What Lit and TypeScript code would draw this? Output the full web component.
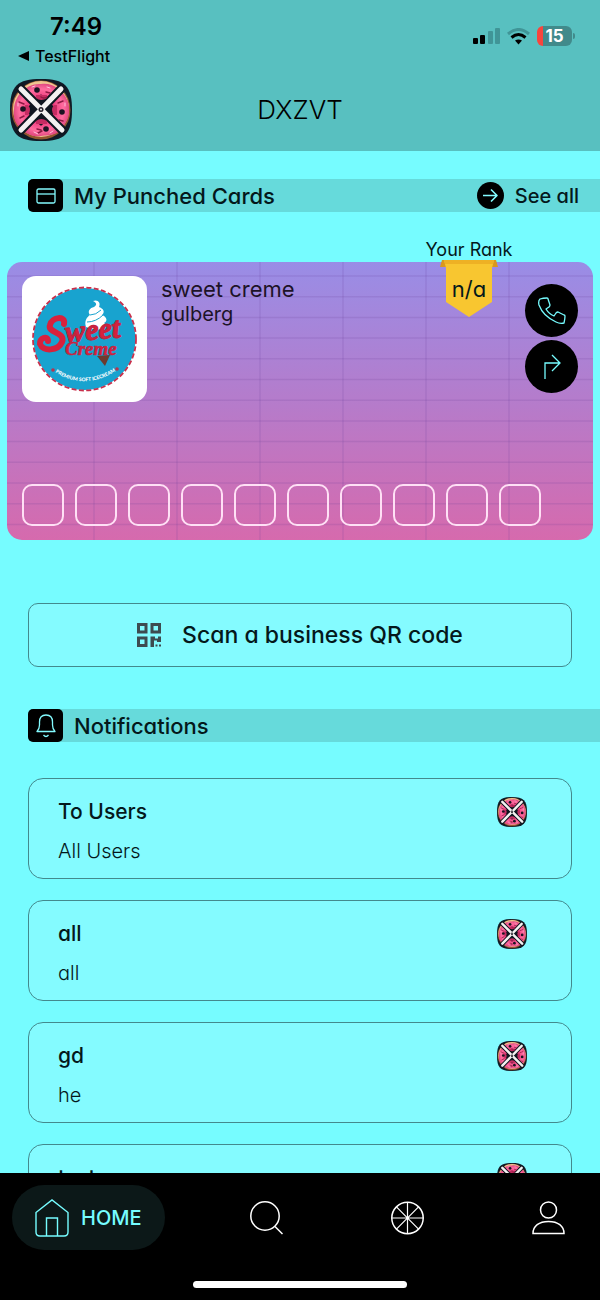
import { LitElement, css, html, svg } from "lit";
import { customElement, property } from "lit/decorators.js";

interface Notice {
  title: string;
  body: string;
}

const notices: Notice[] = [
  { title: 'To Users', body: 'All Users' },
  { title: 'all', body: 'all' },
  { title: 'gd', body: 'he' },
  { title: 'test', body: '' },
];

@customElement('donut-logo')
export class DonutLogo extends LitElement {
  static styles = css`
    :host {
      display: block;
      flex: none;
    }
    svg {
      display: block;
      width: 100%;
      height: 100%;
    }
  `;

  render() {
    return html`
      <svg viewBox="0 0 62 62" aria-hidden="true">
        <defs>
          <clipPath id="shape">
            <path d="M31 0C55 0 62 7 62 31S55 62 31 62S0 55 0 31S7 0 31 0Z" />
          </clipPath>
          <radialGradient id="icing">
            <stop offset="0.35" stop-color="#a01f48" />
            <stop offset="0.5" stop-color="#ee3f80" />
            <stop offset="0.8" stop-color="#ff6c9f" />
            <stop offset="1" stop-color="#e24a82" />
          </radialGradient>
        </defs>
        <g clip-path="url(#shape)">
          <rect width="62" height="62" fill="#101a26" />
          <circle cx="31" cy="31" r="29.500" fill="#94572f" />
          <circle cx="31" cy="30" r="28" fill="#efc491" />
          <path d="M31 5C38 4 43 6 47 9C54 14 60 22 59 31C60 39 54 48 47 54C41 57 35 56 31 57C24 58 18 56 14 52C5 46 3 39 4 31C4 22 9 14 15 10C20 6 25 5 31 5Z" fill="url(#icing)" />
          <path d="M11 10L52 51M51 10L11 51" stroke="#101620" stroke-width="9" stroke-linecap="round" />
          <path d="M31 17L45 31L31 45L17 31Z" fill="#101620" stroke="#101620" stroke-width="3" stroke-linejoin="round" />
          <path d="M26 19Q31 23 37 19V16H26ZM18 26Q22 31 18 36H15V26ZM44 26Q40 31 44 36H47V26ZM26 42Q31 38 37 42V45H26Z" fill="#c52c62" />
          <g fill="#1b1322">
            <circle cx="27" cy="11" r="2.800" />
            <circle cx="13" cy="30" r="2.800" />
            <circle cx="52" cy="33" r="2.800" />
            <circle cx="36" cy="50" r="2.800" />
          </g>
          <path d="M36 13l4 1M31 18q3 2 6 0M9 23l5 2M10 39l4-2M48 24l5-2M49 41l4 1M27 50l4 1M28 54l4-2" fill="none" stroke="#8c1a43" stroke-width="1.500" stroke-linecap="round" />
          <path d="M22 8l3-1M37 8l3 1M8 27v-3M55 27v-3M24 53l4 2M40 54l3-2" fill="none" stroke="#ffc2da" stroke-linecap="round" />
          <path d="M11 10L52 51M51 10L11 51" stroke="#f4f2f1" stroke-width="5" stroke-linecap="round" />
          <circle cx="31" cy="30.500" r="2.500" fill="#24202a" />
          <circle cx="31" cy="30.500" r="1" fill="#f4f2f1" />
        </g>
      </svg>
    `;
  }
}

@customElement('section-bar')
export class SectionBar extends LitElement {
  @property() heading = '';

  static styles = css`
    :host {
      display: flex;
      align-items: center;
      height: 33px;
      margin-left: 28px;
      padding-right: 21px;
      border-radius: 6px 0 0 6px;
      background: #66dadb;
    }
    .icon {
      display: grid;
      place-items: center;
      width: 35px;
      height: 33px;
      border-radius: 5px;
      background: #000;
    }
    h2 {
      flex: 1;
      margin: 0 0 0 11px;
      font-size: 22px;
      font-weight: 500;
      line-height: 28px;
      color: #04181b;
    }
  `;

  render() {
    return html`
      <span class="icon"><slot name="icon"></slot></span>
      <h2>${this.heading}</h2>
      <slot></slot>
    `;
  }
}

@customElement('punch-card')
export class PunchCard extends LitElement {
  @property() name = '';
  @property() branch = '';
  @property() rank = 'n/a';
  @property({type: Number}) slots = 10;

  static styles = css`
    :host {
      display: block;
      position: relative;
      padding: 14px 15px;
      border-radius: 15px;
      background: linear-gradient(#998de6, #b67bca 52%, #d66aad);
      color: #1d1328;
    }
    .grid {
      position: absolute;
      inset: 0;
      width: 100%;
      height: 100%;
    }
    .head {
      display: flex;
      position: relative;
      gap: 14px;
    }
    .brand {
      width: 125px;
      height: 126px;
      border-radius: 14px;
      background: #fff;
    }
    .names {
      flex: 1;
    }
    h3, p {
      margin: 0;
      font-weight: 400;
    }
    h3 {
      font-size: 22px;
      line-height: 26px;
    }
    p {
      font-size: 20px;
      line-height: 24px;
    }
    .actions {
      display: flex;
      flex-direction: column;
      gap: 3px;
      padding-top: 8px;
    }
    .actions a {
      display: grid;
      place-items: center;
      width: 53px;
      height: 53px;
      border-radius: 50%;
      background: #000;
    }
    .rank {
      display: flex;
      flex-direction: column;
      align-items: center;
      position: absolute;
      top: -22px;
      right: 74px;
      width: 100px;
      font-size: 18px;
      line-height: 20px;
      color: #04181b;
    }
    .ribbon {
      display: grid;
      position: relative;
      width: 58px;
      height: 58px;
      font-size: 22px;
      line-height: 58px;
      text-align: center;
    }
    .ribbon > * {
      grid-area: 1 / 1;
    }
    .ribbon span {
      z-index: 1;
    }
    .stamps {
      display: flex;
      position: relative;
      gap: 11px;
      margin: 82px 0 0;
      padding: 0;
      list-style: none;
    }
    .stamps li {
      box-sizing: border-box;
      width: 42px;
      height: 42px;
      border: 2px solid #ffe0f5;
      border-radius: 10px;
    }
  `;

  render() {
    const columns = [87, 170, 253, 336, 419, 502];
    const rows = Array.from({ length: 13 }, (_, i) => 14 + i * 20.7);
    return html`
      <svg class="grid" viewBox="0 0 586 278" preserveAspectRatio="none" aria-hidden="true">
        <g stroke="#6b3f96" stroke-opacity=".16" stroke-width="1.500">
          ${columns.map((x) => svg`<line x1=${x} x2=${x} y1="0" y2="278" />`)}
          ${rows.map((y) => svg`<line x1="0" x2="586" y1=${y} y2=${y} />`)}
        </g>
      </svg>
      <div class="head">
        <svg class="brand" viewBox="0 0 125 126" role="img" aria-label="Sweet Creme">
          <circle cx="62.500" cy="63" r="51" fill="#18a3cf" />
          <circle cx="62.500" cy="63" r="51.500" fill="none" stroke="#c92f4b" stroke-width="1.800" stroke-dasharray="5 2.400" />
          <path d="M64 51C62 45 65 41 68 39C65 35 68 32 72 31C75 29 75 27 71 25C76 23 79 27 77 31C82 33 83 36 80 39C85 41 86 45 82 47C85 49 84 51 82 53C75 54 69 53 64 51Z" fill="#fff" />
          <path d="M68 39q6 0 11-5M65 46q9 0 16-7" fill="none" stroke="#18a3cf" stroke-width="1" />
          <g fill="#d8213c" stroke="#c02440" stroke-width="1.200" font-family="'Liberation Serif', serif" font-style="italic" font-weight="700">
            <path d="M42 48C44 39 30 41 28 49C25 57 44 56 40 66C36 75 21 76 18 68C17 62 26 59 26 65" fill="none" stroke="#d8213c" stroke-width="6" stroke-linecap="round" />
            <text x="44" y="66" font-size="30" transform="rotate(-5 44 66)">weet</text>
            <text x="43" y="79" font-size="19" stroke-width=".6">Creme</text>
          </g>
          <path d="M75 80L88 79L83 90Z" fill="#6d3b2e" />
          <path id="arc" d="M30 94Q62 117 97 93" fill="none" />
          <text font-family="Lato, sans-serif" font-size="5" font-weight="900" fill="#fff">
            <textPath href="#arc" startOffset="50%" text-anchor="middle">PREMIUM SOFT ICECREAM</textPath>
          </text>
          <circle cx="31" cy="94" r="1.800" fill="#b5344f" />
          <circle cx="95" cy="93" r="1.800" fill="#b5344f" />
        </svg>
        <div class="names">
          <h3>${this.name}</h3>
          <p>${this.branch}</p>
        </div>
        <div class="actions">
          <a href="#call" aria-label="Call">
            <svg width="28" height="28" viewBox="0 0 28 28" fill="none" stroke="#76fcff" stroke-width="1.300" stroke-linejoin="round">
              <path d="M2 2Q5 1 9 1Q10 1 10 2L12 8Q12 9 11 10L8 12Q11 17 16 19L18 16Q19 15 20 15L26 18Q27 18 27 19Q27 22 26 26Q22 27 18 25Q5 19 1 8Q0 4 2 2Z" />
            </svg>
          </a>
          <a href="#route" aria-label="Directions">
            <svg width="28" height="28" viewBox="0 0 28 28" fill="none" stroke="#76fcff" stroke-width="1.300">
              <path d="M7 26V10H21M14 2L22 10L14 18" />
            </svg>
          </a>
        </div>
      </div>
      <div class="rank">
        <span>Your Rank</span>
        <div class="ribbon">
          <svg width="58" height="58" viewBox="0 0 58 58" aria-hidden="true">
            <path d="M2 0H56L58 7H0Z" fill="#d9981d" />
            <path d="M4 0H54L52 8V42L29 57L6 42V8Z" fill="#f8c630" />
            <path d="M4 0H54L53 4H5Z" fill="#eeb124" />
          </svg>
          <span>${this.rank}</span>
        </div>
      </div>
      <ul class="stamps">
        ${Array.from({ length: this.slots }, () => html`<li></li>`)}
      </ul>
    `;
  }
}

@customElement('app-root')
export class AppRoot extends LitElement {
  static styles = css`
    :host {
      display: flex;
      flex-direction: column;
      height: 100vh;
      overflow: hidden;
      background: #76fcff;
      color: #04181b;
      font-family: Inter, "Liberation Sans", sans-serif;
      font-feature-settings: "cv11";
    }
    a {
      color: inherit;
      text-decoration: none;
    }
    svg {
      display: block;
    }
    header {
      flex: none;
      padding: 13px 10px 10px;
      background: #58c0c0;
      color: #000;
    }
    .status {
      display: flex;
      justify-content: space-between;
      padding: 0 15px 13px 8px;
    }
    .time {
      padding-left: 32px;
      font-size: 24px;
      font-weight: 600;
      line-height: 28px;
    }
    .back {
      display: flex;
      align-items: center;
      gap: 6px;
      margin-top: 5px;
      font-size: 16px;
      font-weight: 500;
      line-height: 20px;
    }
    .signals {
      display: flex;
      align-items: center;
      gap: 7px;
      height: 46px;
    }
    .battery {
      display: flex;
      align-items: center;
    }
    .level {
      width: 35px;
      border-radius: 6px;
      background: linear-gradient(90deg, #f8453d 6px, #418a8b 6px);
      color: #fff;
      font-size: 17px;
      font-weight: 700;
      line-height: 20px;
      text-align: center;
    }
    .tip {
      width: 2px;
      height: 6px;
      margin-left: 1px;
      border-radius: 0 3px 3px 0;
      background: #418a8b;
    }
    .title {
      display: grid;
      grid-template-columns: 62px 1fr 62px;
      align-items: center;
    }
    .title donut-logo {
      height: 62px;
    }
    h1 {
      margin: 0;
      font-size: 26px;
      font-weight: 300;
      line-height: 32px;
      text-align: center;
    }
    main {
      flex: 1;
      min-height: 0;
      padding-top: 28px;
      overflow: hidden;
    }
    .see-all {
      display: flex;
      align-items: center;
      gap: 11px;
      font-size: 20px;
      font-weight: 500;
      line-height: 28px;
    }
    punch-card {
      margin: 50px 7px 63px;
    }
    .scan {
      display: flex;
      align-items: center;
      justify-content: center;
      gap: 21px;
      box-sizing: border-box;
      width: calc(100% - 56px);
      height: 64px;
      margin: 0 28px 42px;
      padding: 0;
      border: 1px solid #43898d;
      border-radius: 10px;
      background: #84fbff;
      color: inherit;
      font: 500 23px/30px Inter, "Liberation Sans", sans-serif;
      font-feature-settings: inherit;
    }
    .notices {
      display: flex;
      flex-direction: column;
      gap: 21px;
      margin: 36px 28px 0;
      padding: 0;
      list-style: none;
    }
    .notices li {
      display: flex;
      align-items: flex-start;
      justify-content: space-between;
      padding: 18px 44px 13px 29px;
      border: 1px solid #43898d;
      border-radius: 15px;
      background: #84fbff;
    }
    .notices h3, .notices p {
      margin: 0;
    }
    .notices h3 {
      font-size: 21px;
      font-weight: 500;
      line-height: 30px;
    }
    .notices p {
      margin-top: 10px;
      font-size: 20px;
      font-weight: 300;
      line-height: 28px;
    }
    .notices donut-logo {
      width: 30px;
      height: 30px;
    }
    footer {
      flex: none;
      padding: 12px;
      background: #000;
    }
    nav {
      display: flex;
      justify-content: space-between;
      color: #fff;
    }
    nav a {
      display: flex;
      align-items: center;
      gap: 12px;
      height: 65px;
      padding: 0 23px;
      border-radius: 33px;
    }
    nav .active {
      background: #0c1818;
      color: #76fcff;
      font-size: 20px;
      font-weight: 500;
    }
    .indicator {
      width: 214px;
      height: 7px;
      margin: 31px auto 0;
      border-radius: 4px;
      background: #fff;
    }
  `;

  renderHeader() {
    return html`
      <header>
        <div class="status">
          <div>
            <div class="time">7:49</div>
            <a class="back" href="#back">
              <svg width="11" height="10" viewBox="0 0 11 10"><path d="M0 5L11 0V10Z" /></svg>
              TestFlight
            </a>
          </div>
          <div class="signals">
            <svg width="27" height="17" viewBox="0 0 27 17" aria-hidden="true">
              <rect y="10" width="5" height="6" rx="1" />
              <rect x="7" y="7" width="5" height="9" rx="1" />
              <g fill="#409597">
                <rect x="15" y="3" width="5" height="13" rx="1" />
                <rect x="22" width="5" height="16" rx="1" />
              </g>
            </svg>
            <svg width="23" height="17" viewBox="0 0 23 17" fill="none" stroke-width="3" aria-hidden="true">
              <path d="M1 6Q11.500-3 22 6" stroke="#409597" />
              <path d="M4.500 9.500Q11.500 3.500 18.500 9.500" stroke="#000" />
              <path d="M8 12.500Q11.500 10.500 15 12.500L11.500 16.500Z" fill="#000" />
            </svg>
            <div class="battery"><span class="level">15</span><span class="tip"></span></div>
          </div>
        </div>
        <div class="title">
          <donut-logo></donut-logo>
          <h1>DXZVT</h1>
        </div>
      </header>
    `;
  }

  renderNav() {
    return html`
      <footer>
        <nav>
          <a class="active" href="#home">
            <svg width="34" height="38" viewBox="0 0 34 38" fill="none" stroke="currentColor" stroke-width="1.400">
              <path d="M1 13.500L17 1L33 13.500V33Q33 37 29 37H5Q1 37 1 33ZM11.500 37V19H22.500V37" />
            </svg>
            HOME
          </a>
          <a href="#search" aria-label="Search">
            <svg width="33" height="34" viewBox="0 0 33 34" fill="none" stroke="currentColor" stroke-width="1.500">
              <circle cx="15" cy="15" r="14.200" />
              <path d="M25 25.500L32.500 33" />
            </svg>
          </a>
          <a href="#wheel" aria-label="Wheel">
            <svg width="33" height="34" viewBox="0 0 33 34" fill="none" stroke="currentColor" stroke-width="1.500">
              <circle cx="16.500" cy="17" r="15.700" />
              <path d="M16.500 1V33M.5 17H32.500M5.200 5.700L27.800 28.300M27.800 5.700L5.200 28.300" stroke-width="1.200" />
            </svg>
          </a>
          <a href="#profile" aria-label="Profile">
            <svg width="33" height="34" viewBox="0 0 33 34" fill="none" stroke="currentColor" stroke-width="1.500">
              <circle cx="16.500" cy="9" r="8" />
              <path d="M1 32.500C1 25 7 20.500 16.500 20.500S32 25 32 32.500Z" />
            </svg>
          </a>
        </nav>
        <div class="indicator"></div>
      </footer>
    `;
  }

  render() {
    return html`
      ${this.renderHeader()}
      <main>
        <section-bar heading="My Punched Cards">
          <svg slot="icon" width="20" height="16" viewBox="0 0 20 16" fill="none" stroke="#84fbff" stroke-width="1.300">
            <rect x="1" y="1" width="18" height="14" rx="1.500" />
            <path d="M1 6H19" />
          </svg>
          <a class="see-all" href="#cards">
            <svg width="27" height="27" viewBox="0 0 27 27" fill="none" stroke="#84fbff" stroke-width="1.600">
              <circle cx="13.500" cy="13.500" r="13.500" fill="#000" stroke="none" />
              <path d="M6 13.500H20M14 7.500L20 13.500L14 19.500" stroke-linejoin="round" />
            </svg>
            See all
          </a>
        </section-bar>
        <punch-card name="sweet creme" branch="gulberg"></punch-card>
        <button class="scan" type="button">
          <svg width="24" height="24" viewBox="0 0 24 24" fill="#3d4b50" aria-hidden="true">
            <path fill-rule="evenodd" d="M0 0H10.500V10.500H0ZM3 3V7.500H7.500V3ZM13.500 0H24V10.500H13.500ZM16.500 3V7.500H21V3ZM0 13.500H10.500V24H0ZM3 16.500V21H7.500V16.500Z" />
            <path d="M13.500 13.500H18V15.500H21V13.500H24V19H20V17.500H17V24H13.500ZM18.500 21.500H20.500V23.500H18.500ZM22 21.500H24V23.500H22Z" />
          </svg>
          Scan a business QR code
        </button>
        <section-bar heading="Notifications">
          <svg slot="icon" width="20" height="24" viewBox="0 0 20 24" fill="none" stroke="#84fbff" stroke-width="1.300" stroke-linejoin="round">
            <path d="M1 17.500Q3.500 15 3.500 11V8Q3.500 1 10 1T16.500 8V11Q16.500 15 19 17.500ZM7.500 21Q10 24 12.500 21" />
          </svg>
        </section-bar>
        <ul class="notices">
          ${notices.map((notice) => html`
            <li>
              <div>
                <h3>${notice.title}</h3>
                <p>${notice.body}</p>
              </div>
              <donut-logo></donut-logo>
            </li>
          `)}
        </ul>
      </main>
      ${this.renderNav()}
    `;
  }
}
